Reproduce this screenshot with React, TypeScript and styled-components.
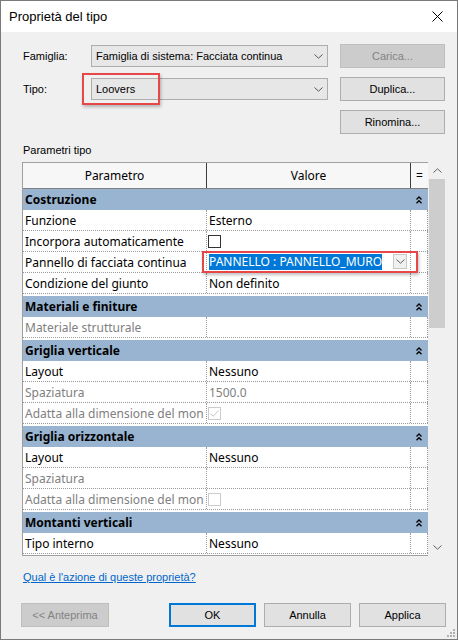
import React from "react";
import styled, { createGlobalStyle } from "styled-components";

const GlobalStyle = createGlobalStyle`
  html, body {
    margin: 0;
    padding: 0;
    background: #f0f0f0;
  }
  body {
    font-family: "Liberation Sans", Arial, sans-serif;
    font-size: 11px;
    color: #000;
  }
`;

const Dialog = styled.div`
  width: 458px;
  height: 640px;
  box-sizing: border-box;
  border: 1px solid #7a7a7a;
  background: #f0f0f0;
  display: flex;
  flex-direction: column;
  position: relative;
  overflow: hidden;
`;

const TitleBar = styled.div`
  height: 31px;
  background: #fff;
  display: flex;
  align-items: center;
  justify-content: space-between;
  padding: 0 14px 1px 8px;
  box-sizing: border-box;
  font-size: 13px;
  color: #000;
`;

const Body = styled.div`
  flex: 1;
  padding: 12px 12px 0 21px;
  display: flex;
  flex-direction: column;
`;

const TopGrid = styled.div`
  display: grid;
  grid-template-columns: 57px 237px 105px;
  grid-auto-rows: 24px;
  column-gap: 12px;
  row-gap: 9px;
  align-items: center;
`;

const Label = styled.div`
  padding-left: 1px;
`;

const ComboWrap = styled.div`
  position: relative;
  height: 22px;
`;

const Combo = styled.div`
  height: 22px;
  box-sizing: border-box;
  border: 1px solid #adadad;
  background: #e7e7e7;
  display: flex;
  align-items: center;
  justify-content: space-between;
  padding: 0 4px 0 4px;
`;

const Highlight = styled.div<{ $l: number; $t: number; $w: number; $h: number }>`
  position: absolute;
  left: ${(p) => p.$l}px;
  top: ${(p) => p.$t}px;
  width: ${(p) => p.$w}px;
  height: ${(p) => p.$h}px;
  border: 2px solid #e8474a;
  box-sizing: border-box;
  box-shadow: 1px 2px 3px rgba(0, 0, 0, 0.25);
  pointer-events: none;
  z-index: 2;
`;

const Button = styled.div<{ $disabled?: boolean; $default?: boolean; $w?: number }>`
  height: 24px;
  width: ${(p) => (p.$w ? `${p.$w}px` : "auto")};
  box-sizing: border-box;
  border: ${(p) =>
    p.$default ? "2px solid #0078d7" : p.$disabled ? "1px solid #bfbfbf" : "1px solid #adadad"};
  background: ${(p) => (p.$disabled ? "#cccccc" : "#e1e1e1")};
  color: ${(p) => (p.$disabled ? "#838383" : "#000")};
  display: flex;
  align-items: center;
  justify-content: center;
`;

const SectionLabel = styled.div`
  margin-top: 8px;
  height: 16px;
  line-height: 16px;
  padding-left: 1px;
`;

const TableArea = styled.div`
  margin-top: 4px;
  display: flex;
  height: 394px;
  width: 424px;
`;

const Table = styled.div`
  width: 406px;
  box-sizing: border-box;
  border: 1px solid #a0a0a0;
  border-right: none;
  background: #fff;
  overflow: hidden;
  font-family: "Noto Sans", "Open Sans", sans-serif;
  font-size: 12px;
`;

const HeaderRow = styled.div`
  display: grid;
  grid-template-columns: 184px 204px 1fr;
  height: 25px;
  background: #f7f7f7;
  border-bottom: 1px solid #7f7f7f;
`;

const HeaderCell = styled.div<{ $last?: boolean }>`
  display: flex;
  align-items: center;
  justify-content: center;
  border-right: ${(p) => (p.$last ? "none" : "1px solid #3c3c3c")};
`;

const GroupRow = styled.div<{ $first?: boolean }>`
  display: grid;
  grid-template-columns: 388px 1fr;
  height: 21px;
  margin-top: ${(p) => (p.$first ? "0" : "2px")};
  background: #99b4d1;
  font-weight: bold;
  align-items: center;
  justify-items: start;
`;

const GroupTitle = styled.div`
  padding-left: 2px;
`;

const GroupToggle = styled.div`
  display: flex;
  padding-left: 5px;
`;

const Row = styled.div`
  display: grid;
  grid-template-columns: 184px 204px 1fr;
  height: 21px;
  box-sizing: border-box;
  border-bottom: 1px dotted #9a9a9a;
  position: relative;
`;

const Cell = styled.div<{ $dim?: boolean; $pad?: number }>`
  display: flex;
  align-items: center;
  padding-left: ${(p) => p.$pad ?? 2}px;
  border-right: 1px dotted #9a9a9a;
  white-space: nowrap;
  overflow: hidden;
  color: ${(p) => (p.$dim ? "#808080" : "#000")};
  position: relative;
`;

const Check = styled.div<{ $disabled?: boolean }>`
  width: 13px;
  height: 13px;
  box-sizing: border-box;
  border: 1px solid ${(p) => (p.$disabled ? "#cccccc" : "#333")};
  background: #fff;
  display: flex;
  align-items: center;
  justify-content: center;
`;

const Selected = styled.span`
  background: #0078d7;
  color: #fff;
  line-height: 16px;
`;

const DropBtn = styled.div`
  position: absolute;
  right: 3px;
  top: 2px;
  width: 14px;
  height: 15px;
  box-sizing: border-box;
  border: 1px solid #c8c8c8;
  background: #f0f0f0;
  display: flex;
  align-items: center;
  justify-content: center;
`;

const Scrollbar = styled.div`
  width: 18px;
  background: #f0f0f0;
  display: flex;
  flex-direction: column;
`;

const ScrollArrow = styled.div`
  height: 17px;
  display: flex;
  align-items: center;
  justify-content: center;
`;

const ScrollTrack = styled.div`
  flex: 1;
  padding: 0 1px;
`;

const Thumb = styled.div`
  height: 149px;
  background: #cdcdcd;
`;

const HelpLink = styled.a`
  margin-top: 13px;
  padding-left: 1px;
  color: #0066cc;
  text-decoration: underline;
  height: 16px;
  line-height: 16px;
  align-self: flex-start;
`;

const Footer = styled.div`
  margin-top: 18px;
  margin-left: -1px;
  display: flex;
  width: 425px;
`;

const FooterRight = styled.div`
  margin-left: auto;
  display: flex;
  gap: 8px;
`;

const Grip = styled.div`
  position: absolute;
  right: 2px;
  bottom: 2px;
  width: 10px;
  height: 10px;
`;

const Chevron = ({ up = false, color = "#444" }: { up?: boolean; color?: string }) => (
  <svg width="9" height="5" viewBox="0 0 9 5">
    <path
      d={up ? "M0.5 4.5 L4.5 0.8 L8.5 4.5" : "M0.5 0.5 L4.5 4.2 L8.5 0.5"}
      fill="none"
      stroke={color}
      strokeWidth="1"
    />
  </svg>
);

const DoubleUp = () => (
  <svg width="6" height="8" viewBox="0 0 6 8">
    <path d="M0.5 3.5 L3 1 L5.5 3.5 M0.5 7.2 L3 4.7 L5.5 7.2" fill="none" stroke="#000" strokeWidth="1.3" />
  </svg>
);

const CheckMark = ({ color }: { color: string }) => (
  <svg width="11" height="11" viewBox="0 0 11 11">
    <path d="M1.5 5.5 L4.2 8.2 L9.5 2.5" fill="none" stroke={color} strokeWidth="1" />
  </svg>
);

type RowItem = {
  kind: "row";
  name: string;
  value?: string;
  dim?: boolean;
  check?: "on" | "off" | "dis-on" | "dis-off";
  select?: boolean;
};

type Item = { kind: "group"; title: string; first?: boolean } | RowItem;

const items: Item[] = [
  { kind: "group", title: "Costruzione", first: true },
  { kind: "row", name: "Funzione", value: "Esterno" },
  { kind: "row", name: "Incorpora automaticamente", check: "off" },
  { kind: "row", name: "Pannello di facciata continua", select: true },
  { kind: "row", name: "Condizione del giunto", value: "Non definito" },
  { kind: "group", title: "Materiali e finiture" },
  { kind: "row", name: "Materiale strutturale", dim: true },
  { kind: "group", title: "Griglia verticale" },
  { kind: "row", name: "Layout", value: "Nessuno" },
  { kind: "row", name: "Spaziatura", value: "1500.0", dim: true },
  { kind: "row", name: "Adatta alla dimensione del mon", dim: true, check: "dis-on" },
  { kind: "group", title: "Griglia orizzontale" },
  { kind: "row", name: "Layout", value: "Nessuno" },
  { kind: "row", name: "Spaziatura", dim: true },
  { kind: "row", name: "Adatta alla dimensione del mon", dim: true, check: "dis-off" },
  { kind: "group", title: "Montanti verticali" },
  { kind: "row", name: "Tipo interno", value: "Nessuno" },
];

function ValueCell({ item }: { item: RowItem }) {
  if (item.check) {
    const disabled = item.check.startsWith("dis");
    const on = item.check.endsWith("on");
    return (
      <Cell $pad={1}>
        <Check $disabled={disabled}>{on && <CheckMark color={disabled ? "#c4c4c4" : "#000"} />}</Check>
      </Cell>
    );
  }
  if (item.select) {
    return (
      <Cell $pad={2}>
        <Selected>PANNELLO : PANNELLO_MURO</Selected>
        <DropBtn>
          <Chevron color="#606060" />
        </DropBtn>
      </Cell>
    );
  }
  return <Cell $dim={item.dim}>{item.value ?? ""}</Cell>;
}

export default function App() {
  return (
    <>
      <GlobalStyle />
      <Dialog>
        <TitleBar>
          <span>Proprietà del tipo</span>
          <svg width="11" height="11" viewBox="0 0 11 11">
            <path d="M0.5 0.5 L10.5 10.5 M10.5 0.5 L0.5 10.5" stroke="#000" strokeWidth="1" />
          </svg>
        </TitleBar>
        <Body>
          <TopGrid>
            <Label>Famiglia:</Label>
            <ComboWrap>
              <Combo>
                <span>Famiglia di sistema: Facciata continua</span>
                <Chevron color="#555" />
              </Combo>
            </ComboWrap>
            <Button $disabled>Carica...</Button>

            <Label>Tipo:</Label>
            <ComboWrap>
              <Combo>
                <span>Loovers</span>
                <Chevron color="#555" />
              </Combo>
              <Highlight $l={-9} $t={-5} $w={78} $h={32} />
            </ComboWrap>
            <Button>Duplica...</Button>

            <div />
            <div />
            <Button>Rinomina...</Button>
          </TopGrid>

          <SectionLabel>Parametri tipo</SectionLabel>

          <TableArea>
            <Table>
              <HeaderRow>
                <HeaderCell>Parametro</HeaderCell>
                <HeaderCell>Valore</HeaderCell>
                <HeaderCell $last>=</HeaderCell>
              </HeaderRow>
              {items.map((it, i) =>
                it.kind === "group" ? (
                  <GroupRow key={i} $first={it.first}>
                    <GroupTitle>{it.title}</GroupTitle>
                    <GroupToggle>
                      <DoubleUp />
                    </GroupToggle>
                  </GroupRow>
                ) : (
                  <Row key={i}>
                    <Cell $dim={it.dim}>{it.name}</Cell>
                    <ValueCell item={it} />
                    <Cell />
                    {it.select && <Highlight $l={179} $t={-1} $w={216} $h={22} />}
                  </Row>
                )
              )}
            </Table>
            <Scrollbar>
              <ScrollArrow>
                <Chevron up color="#606060" />
              </ScrollArrow>
              <ScrollTrack>
                <Thumb />
              </ScrollTrack>
              <ScrollArrow>
                <Chevron color="#606060" />
              </ScrollArrow>
            </Scrollbar>
          </TableArea>

          <HelpLink href="#">Qual è l'azione di queste proprietà?</HelpLink>

          <Footer>
            <Button $disabled $w={88}>
              &lt;&lt; Anteprima
            </Button>
            <FooterRight>
              <Button $default $w={87}>
                OK
              </Button>
              <Button $w={87}>Annulla</Button>
              <Button $w={87}>Applica</Button>
            </FooterRight>
          </Footer>
        </Body>
        <Grip>
          <svg width="10" height="10" viewBox="0 0 10 10">
            {[
              [8, 0],
              [8, 3],
              [8, 6],
              [5, 3],
              [5, 6],
              [2, 6],
            ].map(([x, y], i) => (
              <rect key={i} x={x} y={y + 2} width="2" height="2" fill="#b0b0b0" />
            ))}
          </svg>
        </Grip>
      </Dialog>
    </>
  );
}
